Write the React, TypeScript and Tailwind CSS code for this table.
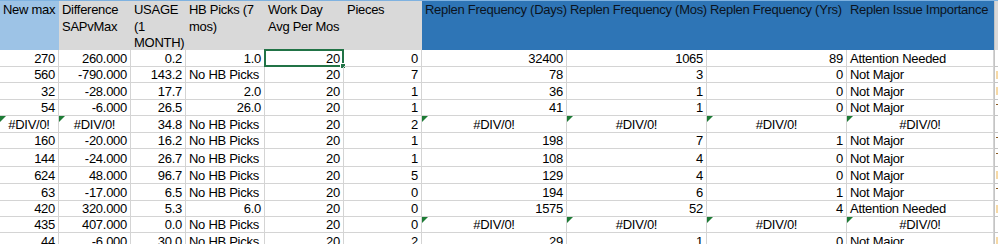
import React from "react";

const W = [59, 72, 55, 79, 79, 78, 145, 140, 140, 147];
const H = [17, 16, 17, 16, 17, 16, 18, 17, 17, 16, 16, 17];

type Cell = { t: string; a: "l" | "r" | "c"; err?: boolean };

const E = (): Cell => ({ t: "#DIV/0!", a: "c", err: true });
const r = (t: string): Cell => ({ t, a: "r" });
const l = (t: string): Cell => ({ t, a: "l" });

const rows: Cell[][] = [
  [r("270"), r("260.000"), r("0.2"), r("1.0"), r("20"), r("0"), r("32400"), r("1065"), r("89"), l("Attention Needed")],
  [r("560"), r("-790.000"), r("143.2"), l("No HB Picks"), r("20"), r("7"), r("78"), r("3"), r("0"), l("Not Major")],
  [r("32"), r("-28.000"), r("17.7"), r("2.0"), r("20"), r("1"), r("36"), r("1"), r("0"), l("Not Major")],
  [r("54"), r("-6.000"), r("26.5"), r("26.0"), r("20"), r("1"), r("41"), r("1"), r("0"), l("Not Major")],
  [E(), E(), r("34.8"), l("No HB Picks"), r("20"), r("2"), E(), E(), E(), E()],
  [r("160"), r("-20.000"), r("16.2"), l("No HB Picks"), r("20"), r("1"), r("198"), r("7"), r("1"), l("Not Major")],
  [r("144"), r("-24.000"), r("26.7"), l("No HB Picks"), r("20"), r("1"), r("108"), r("4"), r("0"), l("Not Major")],
  [r("624"), r("48.000"), r("96.7"), l("No HB Picks"), r("20"), r("5"), r("129"), r("4"), r("0"), l("Not Major")],
  [r("63"), r("-17.000"), r("6.5"), l("No HB Picks"), r("20"), r("0"), r("194"), r("6"), r("1"), l("Not Major")],
  [r("420"), r("320.000"), r("5.3"), r("6.0"), r("20"), r("0"), r("1575"), r("52"), r("4"), l("Attention Needed")],
  [r("435"), r("407.000"), r("0.0"), l("No HB Picks"), r("20"), r("0"), E(), E(), E(), E()],
  [r("44"), r("-6.000"), r("30.0"), l("No HB Picks"), r("20"), r("2"), r("29"), r("1"), r("0"), l("Not Major")],
];

// marks in the clipped last column: 0 none, 1 orange, 2 tick
const kMarks = [0, 1, 1, 2, 0, 2, 2, 1, 2, 1, 0, 1];

const headers: { lines: string[]; bg: string }[] = [
  { lines: ["New max"], bg: "bg-[#9dc3e6]" },
  { lines: ["Difference", "SAPvMax"], bg: "bg-[#d9d9d9]" },
  { lines: ["USAGE", "(1", "MONTH)"], bg: "bg-[#d9d9d9]" },
  { lines: ["HB Picks (7", "mos)"], bg: "bg-[#d9d9d9]" },
  { lines: ["Work Day", "Avg Per Mos"], bg: "bg-[#d9d9d9]" },
  { lines: ["Pieces"], bg: "bg-[#d9d9d9]" },
  { lines: ["Replen Frequency (Days)"], bg: "bg-[#2e75b6]" },
  { lines: ["Replen Frequency (Mos)"], bg: "bg-[#2e75b6]" },
  { lines: ["Replen Frequency (Yrs)"], bg: "bg-[#2e75b6]" },
  { lines: ["Replen Issue Importance"], bg: "bg-[#2e75b6]" },
];

function Triangle() {
  return (
    <div className="absolute left-0 top-0 w-[6px] h-[6px] bg-[#1d7b35] [clip-path:polygon(0_0,100%_0,0_100%)]" />
  );
}

export default function App() {
  return (
    <div
      className="w-[998px] h-[244px] overflow-hidden bg-white text-[13px] tracking-[-0.28px] text-black"
      style={{ fontFamily: '"Liberation Sans", Arial, sans-serif' }}
    >
      {/* header */}
      <div className="flex h-[50px] border-t border-[#7fb2e0]">
        {headers.map((h, i) => (
          <div
            key={i}
            className={`${h.bg} shrink-0 pl-[3px] pt-[1px] leading-[16.5px] whitespace-nowrap overflow-visible ${
              i >= 6 ? "text-[#0b1320]" : "text-black"
            }`}
            style={{ width: W[i] }}
          >
            {h.lines.map((ln, j) => (
              <div key={j}>{ln}</div>
            ))}
          </div>
        ))}
        <div className="w-[4px] shrink-0 bg-[#d9d9d9] border-l border-[#c4c4c4]" />
      </div>
      {/* body */}
      {rows.map((row, ri) => (
        <div key={ri} className="flex" style={{ height: H[ri] }}>
          {row.map((c, ci) => (
            <div
              key={ci}
              className={`relative shrink-0 flex items-end border-r border-b border-[#d4d4d4] leading-[14px] whitespace-nowrap px-[3px] ${
                c.a === "r" ? "justify-end" : c.a === "c" ? "justify-center" : "justify-start"
              }`}
              style={{ width: W[ci] }}
            >
              {c.err && <Triangle />}
              <span>{c.t}</span>
              {ri === 0 && ci === 4 && (
                <div className="absolute left-[-1px] top-[-1px] right-[-1px] bottom-[-1px] border-2 border-[#217346]">
                  <div className="absolute right-[-4px] bottom-[-4px] w-[6px] h-[6px] bg-[#217346] border border-white" />
                </div>
              )}
            </div>
          ))}
          <div className="w-[4px] shrink-0 relative border-l border-b border-[#c4c4c4]">
            {kMarks[ri] === 1 && <div className="absolute left-[1px] top-[4px] w-[3px] h-[8px] bg-[#f6d9a6]" />}
            {kMarks[ri] === 2 && <div className="absolute left-[1px] top-[4px] w-[3px] h-[1px] bg-[#8a5a20]" />}
          </div>
        </div>
      ))}
    </div>
  );
}
